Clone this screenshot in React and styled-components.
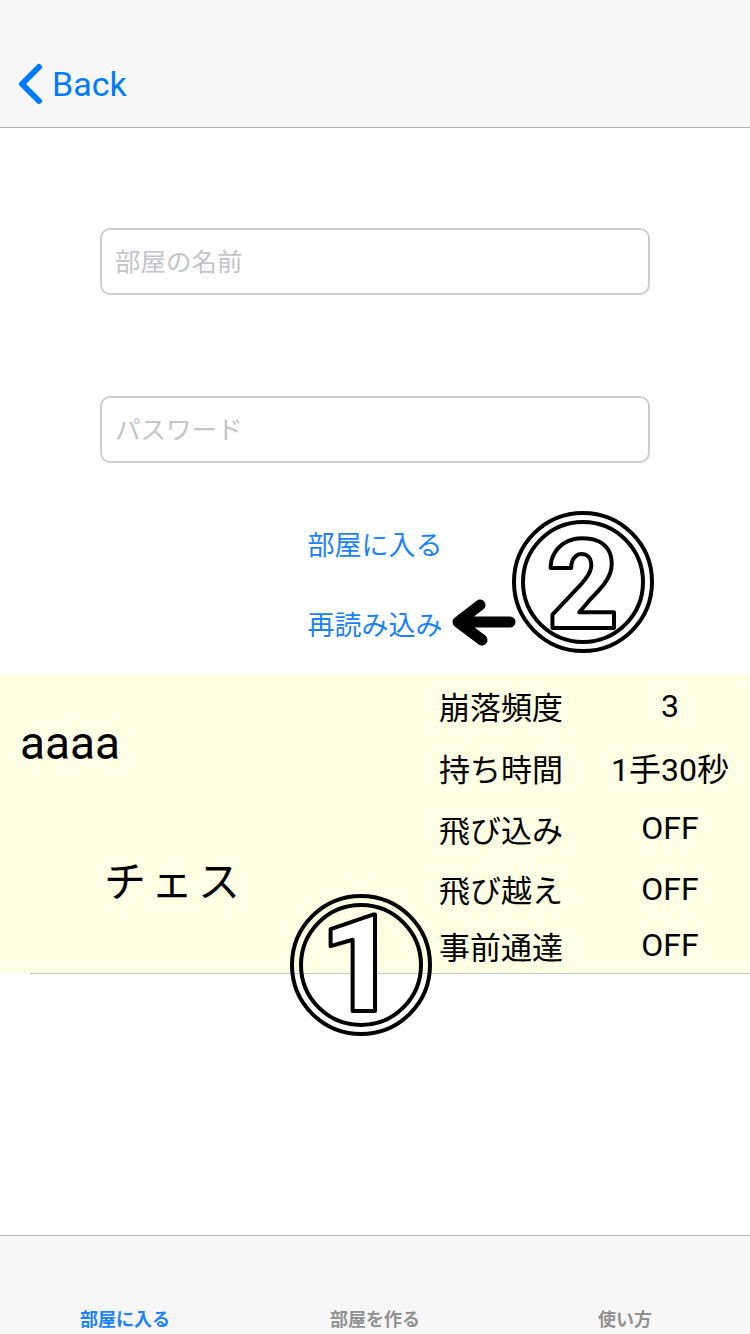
import React from 'react';
import styled, { createGlobalStyle } from 'styled-components';

const GlobalStyle = createGlobalStyle`
    html, body {
        margin: 0;
        padding: 0;
        background: #ffffff;
    }
    body {
        font-family: Roboto, "Noto Sans CJK JP", sans-serif;
    }
`;

const Page = styled.div`
    position: relative;
    width: 750px;
    height: 1334px;
    display: flex;
    flex-direction: column;
    overflow: hidden;
`;

const NavBar = styled.div`
    height: 128px;
    box-sizing: border-box;
    padding: 40px 0 0 16px;
    background: #f7f7f7;
    border-bottom: 1px solid #b2b2b2;
    display: flex;
    align-items: center;
`;

const BackButton = styled.div`
    display: flex;
    align-items: center;
    gap: 8px;
    color: #007aff;
    font-size: 34px;
    font-family: Roboto, sans-serif;
`;

const Content = styled.div`
    flex: 1;
    display: flex;
    flex-direction: column;
`;

const Form = styled.div`
    padding: 100px 100px 0;
    display: flex;
    flex-direction: column;
    gap: 101px;
`;

const TextField = styled.input`
    height: 67px;
    box-sizing: border-box;
    border: 2px solid #cfcfcf;
    border-radius: 10px;
    padding: 0 13px;
    font-size: 25.5px;
    font-family: Roboto, "Noto Sans CJK JP", sans-serif;
    outline: none;
    &::placeholder {
        color: #c4c4c9;
    }
`;

const Actions = styled.div`
    padding-top: 67px;
    display: flex;
    flex-direction: column;
    align-items: center;
    gap: 52px;
`;

const LinkButton = styled.div`
    color: #1a82fb;
    font-size: 27px;
    line-height: 28px;
    font-family: "Noto Sans CJK JP", sans-serif;
`;

const RoomCell = styled.div`
    margin-top: 36px;
    height: 299px;
    background: #fefee4;
    display: flex;
`;

const RoomInfo = styled.div`
    flex: 1;
    display: flex;
    flex-direction: column;
`;

const RoomName = styled.div`
    padding: 42px 0 0 20px;
    font-size: 46px;
    line-height: 54px;
    font-family: Roboto, sans-serif;
    color: #000;
`;

const GameType = styled.div`
    padding: 84px 0 0 104px;
    font-size: 42px;
    line-height: 50px;
    letter-spacing: 5px;
    font-family: "Noto Sans CJK JP", sans-serif;
    color: #000;
`;

const Rules = styled.div`
    width: 311px;
    display: flex;
    flex-direction: column;
`;

const RuleRow = styled.div`
    height: ${({ h }) => h}px;
    display: flex;
    align-items: center;
    font-family: Roboto, "Noto Sans CJK JP", sans-serif;
    font-size: 31px;
    color: #000;
`;

const RuleLabel = styled.div`
    width: 151px;
`;

const RuleValue = styled.div`
    width: 160px;
    text-align: center;
    font-size: 32px;
`;

const Separator = styled.div`
    margin-left: 30px;
    height: 1px;
    background: #c8c7cc;
`;

const TabBar = styled.div`
    height: 99px;
    box-sizing: border-box;
    background: #f7f7f7;
    border-top: 1px solid #b2b2b2;
    display: flex;
    align-items: flex-end;
`;

const TabItem = styled.div`
    flex: 1;
    text-align: center;
    padding-bottom: 3px;
    font-size: 18px;
    line-height: 26px;
    font-weight: 700;
    font-family: "Noto Sans CJK JP", sans-serif;
    color: ${({ active }) => (active ? '#1a82fb' : '#929292')};
`;

const Annotation = styled.svg`
    position: absolute;
    left: ${({ x }) => x}px;
    top: ${({ y }) => y}px;
    overflow: visible;
`;

const CircledNumber = ({ x, y, digit, size, dx = 0 }) => (
    <Annotation x={x} y={y} width="144" height="144" viewBox="0 0 144 144">
        <circle cx="72" cy="72" r="69" fill="none" stroke="#000" strokeWidth="4" />
        <circle cx="72" cy="72" r="60" fill="none" stroke="#000" strokeWidth="4" />
        <text
            x={72 + dx}
            y="118"
            textAnchor="middle"
            fontSize={size}
            fontWeight="900"
            fontFamily="Roboto, sans-serif"
            fill="#fff"
            stroke="#000"
            strokeWidth="4"
            strokeLinejoin="round"
        >
            {digit}
        </text>
    </Annotation>
);

const rules = [
    ['崩落頻度', '3', 64],
    ['持ち時間', '1手30秒', 60],
    ['飛び込み', 'OFF', 64],
    ['飛び越え', 'OFF', 58],
    ['事前通達', 'OFF', 56],
];

const tabs = ['部屋に入る', '部屋を作る', '使い方'];

export default function App() {
    return (
        <>
            <GlobalStyle />
            <Page>
                <NavBar>
                    <BackButton>
                        <svg width="28" height="42" viewBox="0 0 28 42">
                            <path d="M23 4 L6 21 L23 38" fill="none" stroke="#007aff" strokeWidth="6" strokeLinecap="round" strokeLinejoin="round" />
                        </svg>
                        Back
                    </BackButton>
                </NavBar>
                <Content>
                    <Form>
                        <TextField placeholder="部屋の名前" />
                        <TextField placeholder="パスワード" />
                    </Form>
                    <Actions>
                        <LinkButton>部屋に入る</LinkButton>
                        <LinkButton>再読み込み</LinkButton>
                    </Actions>
                    <RoomCell>
                        <RoomInfo>
                            <RoomName>aaaa</RoomName>
                            <GameType>チェス</GameType>
                        </RoomInfo>
                        <Rules>
                            {rules.map(([label, value, h]) => (
                                <RuleRow key={label} h={h}>
                                    <RuleLabel>{label}</RuleLabel>
                                    <RuleValue>{value}</RuleValue>
                                </RuleRow>
                            ))}
                        </Rules>
                    </RoomCell>
                    <Separator />
                </Content>
                <TabBar>
                    {tabs.map((t, i) => (
                        <TabItem key={t} active={i === 0}>{t}</TabItem>
                    ))}
                </TabBar>

                <CircledNumber x={511} y={510} digit="2" size={124} />
                <CircledNumber x={289} y={893} digit="1" size={136} dx={-2} />
                <Annotation x={452} y={600} width="66" height="48" viewBox="0 0 66 48">
                    <path d="M58 22 L6 22 M6 22 L28 5 M6 22 L30 40" fill="none" stroke="#000" strokeWidth="11" strokeLinecap="round" strokeLinejoin="round" />
                </Annotation>
            </Page>
        </>
    );
}
